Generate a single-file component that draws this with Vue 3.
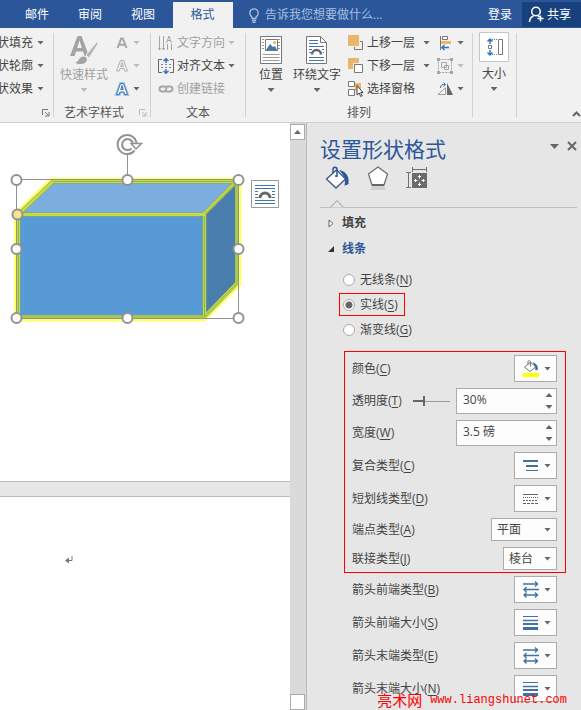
<script setup>
import { ref } from 'vue'

const tabs = ['邮件', '审阅', '视图', '格式']
const shapeMenus = ['状填充', '状轮廓', '状效果']
const line = ref('S')
const lineKinds = [
  { key: 'N', text: '无线条' },
  { key: 'S', text: '实线' },
  { key: 'G', text: '渐变线' },
]
const transparency = ref(30)
const width = ref('3.5 磅')
const cap = ref('平面')
const join = ref('棱台')
const arrows = [
  { key: 'B', text: '箭头前端类型', icon: 'type' },
  { key: 'S', text: '箭头前端大小', icon: 'size' },
  { key: 'E', text: '箭头末端类型', icon: 'type' },
  { key: 'N', text: '箭头末端大小', icon: 'size' },
]
const handles = [
  [16, 180], [127, 180], [238, 180], [16, 249], [238, 249], [16, 318], [127, 318], [238, 318],
]
</script>

<template>
  <div class="app">
    <header class="topbar">
      <nav class="tabs">
        <button v-for="t in tabs" :key="t" type="button" class="tab" :class="{ active: t === '格式' }">{{ t }}</button>
      </nav>
      <button type="button" class="tell">
        <svg width="10" height="15" viewBox="0 0 10 15" fill="none" stroke="#a9bfe0" stroke-width="1.3">
          <path d="M3 10.5V9C1.6 8 .8 6.700 .8 5a4.200 4.200 0 0 1 8.400 0c0 1.700-.8 3-2.200 4v1.500zM3 12.500h4M3.500 14.300h3" />
        </svg>
        <span>告诉我您想要做什么...</span>
      </button>
      <button type="button" class="login">登录</button>
      <button type="button" class="share">
        <svg width="17" height="17" viewBox="0 0 17 17" fill="none" stroke="#fff" stroke-width="1.500">
          <circle cx="8" cy="5.500" r="4.300" />
          <path d="M1.500 16c0-3 1.500-5 4.200-6.200M9.800 9.500l1.700 1.500M12.500 9.500v6M9.500 12.500h6" />
        </svg>
        <span>共享</span>
      </button>
    </header>

    <section class="ribbon">
      <div class="group g-shape">
        <div class="group-body">
          <div class="rows">
            <button v-for="m in shapeMenus" :key="m" type="button" class="cmd">{{ m }}<i class="caret"></i></button>
          </div>
        </div>
        <div class="group-label end">
          <svg class="launcher" width="8" height="8" viewBox="0 0 8 8"><path d="M.5 6V.5H6M3 3l3.500 3.500M7 3v4H3" /></svg>
        </div>
      </div>
      <i class="sep"></i>
      <div class="group g-art">
        <div class="group-body">
          <button type="button" class="big off">
            <svg width="30" height="30" viewBox="0 0 30 30">
              <path d="M1 21L8.500 1h4L20 21h-4.500l-1.500-4.500H7L5.500 21zM8.200 13h4.700L10.500 5.500z" fill="#a3a3a3" />
              <path d="M28.500 6L17 20l3 3L29 9z" fill="#b4b4b4" stroke="#f1f1f1" />
              <path d="M5 28c4 0 4-6 9-7 3 0 5 2 4 5-1.500 4-8 4.500-13 2z" fill="#a3a3a3" stroke="#f1f1f1" />
            </svg>
            <span>快速样式</span><i class="caret"></i>
          </button>
          <div class="rows art-rows">
            <button type="button" class="cmd off" aria-label="文本填充">
              <svg width="14" height="14" viewBox="0 0 14 14"><path d="M2.500 12L6.200 2.500h1.600l3.700 9.500M4 8.800h6" fill="none" stroke="#a6a6a6" stroke-width="2" /></svg><i class="caret"></i>
            </button>
            <button type="button" class="cmd off" aria-label="文本轮廓">
              <svg width="14" height="14" viewBox="0 0 14 14"><path d="M1.500 12L5.500 1.500h3l4 10.500h-2.700L9 9.500H5L4.200 12zM5.700 7.500h2.600L7 3.500z" fill="none" stroke="#b0b0b0" /></svg><i class="caret"></i>
            </button>
            <button type="button" class="cmd" aria-label="文本效果">
              <svg width="14" height="14" viewBox="0 0 14 14"><path d="M1.500 12.500L5.500 1.500h3l4 11h-2.700L9 10H5l-.8 2.500zM5.700 7.500h2.600L7 3.500z" fill="#fff" stroke="#9dc8ec" stroke-width="3" /><path d="M1.500 12.500L5.500 1.500h3l4 11h-2.700L9 10H5l-.8 2.500zM5.700 7.500h2.600L7 3.500z" fill="#fff" stroke="#3f74ad" /></svg><i class="caret"></i>
            </button>
          </div>
        </div>
        <div class="group-label">
          <span>艺术字样式</span>
          <svg class="launcher off" width="8" height="8" viewBox="0 0 8 8"><path d="M.5 6V.5H6M3 3l3.500 3.500M7 3v4H3" /></svg>
        </div>
      </div>
      <i class="sep"></i>
      <div class="group g-text">
        <div class="group-body">
          <div class="rows">
            <button type="button" class="cmd icon-cmd off">
              <svg width="16" height="16" viewBox="0 0 16 16" fill="none" stroke="#a6a6a6"><path d="M1.500 1v14M5.500 1v14M9.500 9v6M13.500 9v6M8.500 8l2.500-7 2.500 7M9.500 5.500h3M.5 13l1 2 1-2M4.500 13l1 2 1-2" /></svg>
              文字方向<i class="caret"></i>
            </button>
            <button type="button" class="cmd icon-cmd">
              <svg width="16" height="16" viewBox="0 0 16 16" fill="none"><path d="M4 1.500H.5v13H4M12 1.500h3.500v13H12" stroke="#666" /><path d="M3 6.500h2M7 6.500h2M11 6.500h2M3 9.500h2M7 9.500h2M11 9.500h2" stroke="#888" /><path d="M8 1v4M8 11v4M5.500 3L8 .8 10.500 3M5.500 13L8 15.200l2.500-2.200" stroke="#2f75b5" stroke-width="1.500" /></svg>
              对齐文本<i class="caret"></i>
            </button>
            <button type="button" class="cmd icon-cmd off">
              <svg width="16" height="16" viewBox="0 0 16 16" fill="none" stroke="#a6a6a6" stroke-width="2"><path d="M7.500 10.500H4A2.500 2.500 0 0 1 4 5.500h2.500c1 0 2 1 2 2.500M8.500 5.500H12a2.500 2.500 0 0 1 0 5H9.500c-1 0-2-1-2-2.500" /></svg>
              创建链接
            </button>
          </div>
        </div>
        <div class="group-label"><span>文本</span></div>
      </div>
      <i class="sep"></i>
      <div class="group g-arrange">
        <div class="group-body">
          <button type="button" class="big">
            <svg width="24" height="30" viewBox="0 0 24 30"><path d="M1.500 1.500h21v27h-21z" fill="#fff" stroke="#777" /><path d="M3 4.500h2M3 7.500h2M3 10.500h2M3 13.500h2M19 4.500h2M19 7.500h2M19 10.500h2M19 13.500h2M3.500 19.500h17M3.500 22.500h17M3.500 25.500h17" stroke="#999" /><path d="M6.500 4.500h12v11h-12z" fill="#fff" stroke="#777" /><path d="M7 15l4-6 3 3 2-1 2 4z" fill="#3f78ad" /><circle cx="15.500" cy="7.500" r="1.500" fill="#e8b05a" /></svg>
            <span>位置</span><i class="caret"></i>
          </button>
          <button type="button" class="big">
            <svg width="24" height="30" viewBox="0 0 24 30"><path d="M1.500 1.500h14l6 6v21h-20z" fill="#fff" stroke="#777" /><path d="M15.500 1.500v6h6" fill="none" stroke="#777" /><path d="M4 5.500h9M4 8.500h9M4 11.500h15M4 14.500h3M4 17.500h2M17 14.500h2M18 17.500h1M4 22.500h15M4 25.500h15" stroke="#3f78ad" /><path d="M7 19.500a4.500 4.500 0 0 1 9 0" fill="none" stroke="#666" stroke-width="2.500" /></svg>
            <span>环绕文字</span><i class="caret"></i>
          </button>
          <div class="rows order-rows">
            <button type="button" class="cmd">
              <svg width="16" height="16" viewBox="0 0 16 16"><path d="M12 6.500h2.500v8h-8V12" fill="none" stroke="#777" /><path d="M0 0h11v11H0z" fill="#ebb669" /></svg>
              <span>上移一层</span><i class="caret"></i>
            </button>
            <button type="button" class="cmd">
              <svg width="16" height="16" viewBox="0 0 16 16"><path d="M0 0h11v11H0z" fill="#ebb669" /><path d="M5 5h10v10H5z" fill="#f1f1f1" /><path d="M6.500 6.500h8v8h-8z" fill="#fff" stroke="#777" /></svg>
              <span>下移一层</span><i class="caret"></i>
            </button>
            <button type="button" class="cmd">
              <svg width="16" height="16" viewBox="0 0 16 16"><path d="M7 2h6v8H7z" fill="#ebb669" /><path d="M.5.5h6v5h-6zM.5 8.500h6v6h-6z" fill="#fff" stroke="#777" /><path d="M9 4.500v9.500l2.200-2 1.500 3.500 1.500-.7-1.500-3.300H15z" fill="#fff" stroke="#444" /></svg>
              <span>选择窗格</span>
            </button>
          </div>
          <div class="rows align-rows">
            <button type="button" class="cmd" aria-label="对齐">
              <svg width="16" height="16" viewBox="0 0 16 16"><path d="M3.500 1v14" stroke="#777" /><path d="M5.500 1.500h5v3h-5z" fill="#fff" stroke="#777" /><path d="M4 6h10v3H4z" fill="#ebb669" /><path d="M5 12.500h7M7.500 10L5 12.500 7.500 15" fill="none" stroke="#2f75b5" stroke-width="1.500" /></svg><i class="caret"></i>
            </button>
            <button type="button" class="cmd off" aria-label="组合">
              <svg width="16" height="16" viewBox="0 0 16 16" fill="none" stroke="#a6a6a6"><path d="M1.500 1.500h13v13h-13z" stroke-dasharray="2 1" /><path d="M4.500 4.500h5v5h-5zM7.500 7.500h4v4h-4z" /><path d="M0 0h3v3H0zM13 0h3v3h-3zM0 13h3v3H0zM13 13h3v3h-3z" fill="#a6a6a6" stroke="none" /></svg><i class="caret"></i>
            </button>
            <button type="button" class="cmd" aria-label="旋转">
              <svg width="16" height="16" viewBox="0 0 16 16"><path d="M1 13.500h7.500V7z" fill="#fff" stroke="#999" /><path d="M10 2v12h6z" fill="#666" /><path d="M3.500 7c0-3 2-4 4.500-3.500M6.500 1.500l2 2-2 2" fill="none" stroke="#2f75b5" /></svg><i class="caret"></i>
            </button>
          </div>
        </div>
        <div class="group-label"><span>排列</span></div>
      </div>
      <i class="sep"></i>
      <div class="group g-size">
        <div class="group-body">
          <button type="button" class="big boxed">
            <svg width="30" height="30" viewBox="0 0 30 30"><path d="M.5.5h29v29H.5z" fill="#fff" stroke="#c6c6c6" /><path d="M19.500 7.500h4v15h-4z" fill="#fff" stroke="#777" /><path d="M13 7.500h6M13 22.500h6" stroke="#777" stroke-dasharray="1 1" /><path d="M9.500 13.500h3v3h-3z" fill="#fff" stroke="#777" /><path d="M8.500 9.500L11 7l2.500 2.500M11 7v5M8.500 20.500L11 23l2.500-2.500M11 23v-5" fill="none" stroke="#2f75b5" stroke-width="1.500" /></svg>
            <span>大小</span><i class="caret"></i>
          </button>
        </div>
      </div>
      <i class="sep"></i>
      <button type="button" class="collapse" aria-label="折叠功能区">
        <svg width="9" height="6" viewBox="0 0 9 6"><path d="M1 5l3.500-3.500L8 5" fill="none" stroke="#666" stroke-width="2" /></svg>
      </button>
    </section>

    <main class="work">
      <div class="document">
        <div class="page first">
          <svg class="drawing" width="290" height="210" viewBox="0 123 290 210">
            <path d="M52 180.500H238.500V284L204 318.500H17V214z" fill="none" stroke="#ffff6e" stroke-width="6" />
            <path d="M52 181H238L204 214H18z" fill="#7badde" />
            <path d="M18 214H204V318H18z" fill="#589ad5" />
            <path d="M204 214L238 181V284L204 318z" fill="#497dad" />
            <g fill="none" stroke-linejoin="bevel">
              <path d="M53 181.500H237V283L204 317H18.500V214.500zM18 214.500H204.500V317M204 214L237 181" stroke="#7fab6e" stroke-width="4" />
              <path d="M53 181.500H237V283L204 317H18.500V214.500zM18 214.500H204.500V317M204 214L237 181" stroke="#c8da3c" stroke-width="3" />
              <path d="M53 181.500H237V283L204 317H18.500V214.500M204.500 216V317M205 214L237 182" stroke="#8fb45f" />
            </g>
            <path d="M16.500 179.500h222v139h-222zM127.500 179v-25" fill="none" stroke="#929292" />
            <g fill="#fff" stroke="#929292" stroke-width="2">
              <circle v-for="(h, i) in handles" :key="i" :cx="h[0] + 0.5" :cy="h[1]" r="5" />
              <circle cx="17.500" cy="214.500" r="5" fill="#fbe28f" />
            </g>
            <g fill="none" stroke="#929292">
              <path d="M134.500 150.500a9.500 9.500 0 1 1 2-7.500" stroke-width="2" />
              <path d="M131.500 148.500a5.500 5.500 0 1 1 1.500-5" stroke-width="2" />
              <path d="M131 143.500h10.500l-5.500 5.500z" fill="#fff" stroke-width="1.500" />
            </g>
            <path d="M251.500 180.500h27v27h-27z" fill="#fff" stroke="#999" />
            <path d="M255 185.500h20M255 188.500h20M255 191.500h3M272 191.500h3M255 194.500h3M272 194.500h3M255 197.500h3M272 197.500h3M255 200.500h20M255 203.500h20" stroke="#3f78ad" />
            <path d="M260 198a5 5 0 0 1 10 0" fill="none" stroke="#666" stroke-width="3" />
          </svg>
        </div>
        <div class="page second">
          <svg width="8" height="9" viewBox="0 0 8 9"><path d="M7 1v4.500H2" fill="none" stroke="#777" /><path d="M4 2.500v6l-4-3z" fill="#777" /></svg>
        </div>
      </div>
      <div class="scroller">
        <button type="button" aria-label="向上滚动"><svg width="7" height="4" viewBox="0 0 7 4"><path d="M0 4l3.500-4L7 4z" fill="#666" /></svg></button>
        <button type="button" aria-label="向下滚动"></button>
      </div>

      <aside class="pane">
        <div class="pane-head">
          <h2>设置形状格式</h2>
          <button type="button" aria-label="选项"><svg width="9" height="5" viewBox="0 0 9 5"><path d="M0 0h9L4.500 5z" fill="#666" /></svg></button>
          <button type="button" aria-label="关闭"><svg width="10" height="10" viewBox="0 0 10 10"><path d="M1 1l8 8M9 1L1 9" stroke="#666" stroke-width="2" /></svg></button>
        </div>
        <div class="pane-tabs">
          <button type="button" aria-label="填充与线条">
            <svg width="24" height="24" viewBox="0 0 24 24"><path d="M14 4c6 1 9 5 9.500 9v5c-2 1.500-4 1.500-4 1.500 1-4 .5-8-2.500-12z" fill="#2b579a" /><path d="M1.500 13L11.500 4l9 9-9.500 9z" fill="#fff" stroke="#3d5a85" stroke-width="1.300" /><path d="M8 7V3.500c0-3 4-3 4 0V11M10 10h2" fill="none" stroke="#2b579a" stroke-width="1.500" /></svg>
          </button>
          <button type="button" aria-label="效果">
            <svg width="24" height="24" viewBox="0 0 24 24"><path d="M6 20h12l2 4H4z" fill="#cfcfcf" /><path d="M12 1l9.500 7-3.500 11H6L2.500 8z" fill="#fff" stroke="#707070" stroke-width="1.300" /><path d="M6 19h12" stroke="#666" stroke-width="2" /></svg>
          </button>
          <button type="button" aria-label="布局属性">
            <svg width="24" height="24" viewBox="0 0 24 24"><path d="M-1 6.500h5M-1 21.500h5M1.500 6.500v15M5.500 1v5M19.500 1v5M5.500 3.500h14" stroke="#707070" fill="none" /><path d="M5 7h15v15H5z" fill="#6b6b6b" /><path d="M12.500 9.500v3M12.500 16.500v3M7.500 14.500h3M14.500 14.500h3M11 11l1.500-1.500L14 11M11 18l1.500 1.500L14 18M9 13l-1.500 1.500L9 16M16 13l1.500 1.500L16 16" stroke="#fff" fill="none" /></svg>
          </button>
        </div>
        <div class="pane-rule">
          <svg width="14" height="9" viewBox="0 0 14 9"><path d="M0 8.500L7 1l7 7.500z" fill="#e6e6e6" /><path d="M.5 8.500L7 1.500l6.500 7" fill="none" stroke="#bdbdbd" stroke-width="1.500" /></svg>
        </div>

        <button type="button" class="fold">
          <svg width="6" height="9" viewBox="0 0 6 9"><path d="M1 1l4 3.500L1 8z" fill="#fff" stroke="#666" /></svg>填充
        </button>
        <button type="button" class="fold open">
          <svg width="6" height="6" viewBox="0 0 6 6"><path d="M6 0v6H0z" fill="#333" /></svg>线条
        </button>

        <div class="kinds">
          <label v-for="k in lineKinds" :key="k.key" :class="{ marked: k.key === 'S' }">
            <input v-model="line" type="radio" name="line" :value="k.key" /><span>{{ k.text }}(<u>{{ k.key }}</u>)</span>
          </label>
        </div>

        <div class="settings marked">
          <div class="row">
            <label for="color">颜色(<u>C</u>)</label>
            <button id="color" type="button" class="pick">
              <svg width="17" height="17" viewBox="0 0 17 17"><path d="M10.500 2.500c3.500.5 5.500 3 5.500 7l-2.500 1c0-3-1-5-3-8z" fill="#3f6a95" /><path d="M2.500 7l6-5 5 5-5.500 4.500z" fill="#fff" stroke="#777" /><path d="M6 5V2C6 0 8.500 0 8.500 2v4.500" fill="none" stroke="#777" /><path d="M1 13h16v4H1z" fill="#ff0" /></svg><i class="caret"></i>
            </button>
          </div>
          <div class="row">
            <label for="transparency">透明度(<u>T</u>)</label>
            <input v-model="transparency" class="slider" type="range" min="0" max="100" aria-label="透明度" />
            <div class="spin">
              <input id="transparency" type="text" :value="transparency + '%'" />
              <span><button type="button" aria-label="增加"><i class="caret up"></i></button><button type="button" aria-label="减少"><i class="caret"></i></button></span>
            </div>
          </div>
          <div class="row">
            <label for="width">宽度(<u>W</u>)</label>
            <div class="spin">
              <input id="width" v-model="width" type="text" />
              <span><button type="button" aria-label="增加"><i class="caret up"></i></button><button type="button" aria-label="减少"><i class="caret"></i></button></span>
            </div>
          </div>
          <div class="row">
            <label for="compound">复合类型(<u>C</u>)</label>
            <button id="compound" type="button" class="pick">
              <svg width="17" height="17" viewBox="0 0 17 17" stroke="#41719c"><path d="M1 4h15M4 9h12" stroke-width="2" /><path d="M4 13.500h12" /></svg><i class="caret"></i>
            </button>
          </div>
          <div class="row">
            <label for="dash">短划线类型(<u>D</u>)</label>
            <button id="dash" type="button" class="pick">
              <svg width="17" height="17" viewBox="0 0 17 17" stroke="#666"><path d="M1 4.500h15" /><path d="M1 7.500h15" stroke-dasharray="1 1" /><path d="M1 10.500h15" stroke-dasharray="2 1" /><path d="M1 13.500h15" stroke-dasharray="3 1" /></svg><i class="caret"></i>
            </button>
          </div>
          <div class="row">
            <label for="cap">端点类型(<u>A</u>)</label>
            <div class="choice wide">
              <select id="cap" v-model="cap"><option>平面</option><option>圆形</option><option>正方形</option></select><i class="caret"></i>
            </div>
          </div>
          <div class="row">
            <label for="join">联接类型(<u>J</u>)</label>
            <div class="choice">
              <select id="join" v-model="join"><option>棱台</option><option>圆形</option><option>斜接</option></select><i class="caret"></i>
            </div>
          </div>
        </div>
        <div class="settings">
          <div v-for="a in arrows" :key="a.key" class="row">
            <label :for="'arrow-' + a.key">{{ a.text }}(<u>{{ a.key }}</u>)</label>
            <button :id="'arrow-' + a.key" type="button" class="pick">
              <svg v-if="a.icon === 'type'" width="17" height="17" viewBox="0 0 17 17" fill="none" stroke="#41719c"><path d="M1 3h15M13 .5L15.500 3 13 5.500M2 8.500h15M4.500 6L2 8.500 4.500 11M2 14h14M4.500 11.500L2 14l2.500 2.500M13 11.500l2.500 2.500-2.500 2.500" stroke-width="1.300" /></svg>
              <svg v-else width="17" height="17" viewBox="0 0 17 17" stroke="#41719c"><path d="M1 2.500h15" /><path d="M1 6.500h15" stroke-width="1.500" /><path d="M1 10h15" stroke-width="2" /><path d="M1 14.500h15" stroke-width="3" /></svg>
              <i class="caret"></i>
            </button>
          </div>
        </div>
      </aside>
    </main>
    <p class="credit"><span>亮术网</span>www.liangshunet.com</p>
  </div>
</template>

<style>
body {
  margin: 0;
}
</style>

<style scoped>
.app {
  position: relative;
  display: flex;
  flex-direction: column;
  min-height: 100vh;
  overflow: hidden;
  font: 12px/18px "Open Sans", "Noto Sans CJK SC", sans-serif;
  color: #444;
  background: #e6e6e6;
}
.app * {
  box-sizing: border-box;
}
button,
input,
select {
  margin: 0;
  padding: 0;
  border: 0;
  border-radius: 0;
  background: none;
  font: inherit;
  color: inherit;
}
svg {
  display: block;
  flex: none;
  overflow: visible;
}
u {
  text-underline-offset: 2px;
}
.caret {
  flex: none;
  width: 7px;
  height: 4px;
  background: #666;
  clip-path: polygon(0 0, 100% 0, 50% 100%);
}
.caret.up {
  clip-path: polygon(50% 0, 100% 100%, 0 100%);
}
.topbar {
  display: flex;
  height: 28px;
  padding-top: 2px;
  background: #2b579a;
  color: #fff;
}
.tabs {
  display: flex;
  padding-left: 14px;
}
.tab {
  width: 53px;
  padding-right: 7px;
}
.tab.active {
  width: 60px;
  padding: 0 1px 0 0;
  background: #f1f1f1;
  color: #2b579a;
}
.tell {
  display: flex;
  flex: 1;
  align-items: center;
  gap: 6px;
  padding-left: 16px;
  color: #a9bfe0;
  white-space: nowrap;
}
.login {
  padding: 0 10px;
}
.share {
  display: flex;
  align-items: center;
  gap: 2px;
  height: 25px;
  padding: 0 10px 0 6px;
  background: #17407c;
}
.ribbon {
  display: flex;
  padding-top: 3px;
  border-bottom: 1px solid #cfcfcf;
  background: #f1f1f1;
}
.sep {
  width: 1px;
  margin: 2px 0 5px;
  background: #d2d2d2;
}
.group-body {
  display: flex;
  height: 69px;
}
.group-label {
  display: flex;
  align-items: center;
  justify-content: center;
  height: 22px;
  padding-top: 3px;
  color: #555;
}
.rows {
  display: grid;
  grid-template-rows: repeat(3, 23px);
}
.cmd {
  display: flex;
  align-items: center;
  gap: 4px;
  white-space: nowrap;
}
.big {
  display: flex;
  flex-direction: column;
  align-items: center;
  padding-top: 4px;
  white-space: nowrap;
}
.big span {
  margin-top: 1px;
}
.big .caret {
  margin-top: 4px;
}
.off {
  color: #a0a0a0;
}
.off .caret {
  background: #bbb;
}
.launcher {
  fill: none;
  stroke: #777;
}
.launcher.off {
  stroke: #bbb;
}
.g-shape {
  width: 53px;
}
.g-shape .rows {
  margin-left: -3px;
}
.group-label.end {
  justify-content: flex-end;
  padding-right: 3px;
}
.g-art {
  width: 96px;
}
.g-art .group-body {
  gap: 7px;
  padding-left: 6px;
}
.g-art .group-label {
  justify-content: space-between;
  padding-right: 3px;
  padding-left: 10px;
}
.g-text {
  width: 94px;
  padding-left: 7px;
}
.g-text .group-label {
  padding-right: 7px;
}
.icon-cmd {
  gap: 3px;
}
.g-arrange {
  width: 226px;
}
.g-arrange .group-body {
  padding-left: 13px;
}
.g-arrange .big {
  margin-right: 10px;
}
.order-rows {
  margin-left: -3px;
}
.order-rows .cmd {
  gap: 3px;
}
.order-rows .caret {
  margin-left: 5px;
}
.align-rows {
  margin-left: 7px;
}
.g-size {
  width: 43px;
  padding-left: 6px;
}
.big.boxed {
  padding-top: 1px;
}
.big.boxed span {
  margin-top: 3px;
}
.collapse {
  align-self: flex-end;
  margin-left: auto;
  padding-bottom: 5px;
}
.work {
  display: flex;
  flex: 1;
}
.document {
  display: flex;
  flex: 1;
  flex-direction: column;
  gap: 14px;
  min-width: 0;
}
.page {
  background: #fff;
}
.first {
  height: 359px;
  border-bottom: 1px solid #bcbcbc;
}
.second {
  flex: 1;
  padding: 58px 0 0 65px;
  border-top: 1px solid #bcbcbc;
}
.scroller {
  display: flex;
  flex-direction: column;
  justify-content: space-between;
  width: 16px;
  padding: 1px 1px 1px 0;
  background: #dadada;
}
.scroller button {
  display: grid;
  place-items: center;
  height: 16px;
  border: 1px solid #ababab;
  background: #fff;
}
.pane {
  width: 275px;
  padding: 11px 4px 6px 13px;
  border-left: 1px solid #b8b8b8;
}
.pane-head {
  display: flex;
  align-items: center;
  gap: 8px;
}
.pane-head h2 {
  flex: 1;
  margin: 0;
  font-size: 21px;
  font-weight: 400;
  line-height: 30px;
  color: #2b579a;
}
.pane-head button {
  padding-bottom: 6px;
}
.pane-tabs {
  display: flex;
  gap: 17px;
  padding: 2px 0 0 5px;
}
.pane-rule {
  margin: 9px 0 2px;
  border-bottom: 1px solid #bdbdbd;
}
.pane-rule svg {
  margin: 0 0 -1px 10px;
}
.fold {
  display: flex;
  align-items: center;
  gap: 8px;
  height: 26px;
  padding-left: 8px;
  font-weight: 700;
}
.fold.open {
  color: #2b579a;
}
.kinds {
  display: grid;
  justify-items: start;
  gap: 2px;
  margin: 6px 11px 5px 19px;
}
.kinds label {
  display: flex;
  align-items: center;
  gap: 5px;
  height: 23px;
  padding: 0 6px 0 3px;
  border: 1px solid transparent;
}
.kinds .marked {
  border-color: #f00;
}
.kinds input {
  appearance: none;
  width: 12px;
  height: 12px;
  border: 1px solid #ababab;
  border-radius: 50%;
  background: #fff;
}
.kinds input:checked {
  background: radial-gradient(circle, #666 0 3px, #fff 4px);
}
.settings {
  display: grid;
  gap: 6px;
  margin: 0 11px 0 24px;
  padding: 2px 8px 2px 7px;
  border: 1px solid transparent;
}
.settings.marked {
  margin-top: 10px;
  padding-top: 3px;
  border-color: #f00;
}
.row {
  display: flex;
  align-items: center;
  justify-content: space-between;
}
.pick {
  display: flex;
  align-items: center;
  justify-content: space-between;
  width: 43px;
  height: 27px;
  padding: 0 5px 0 7px;
  border: 1px solid #ababab;
  background: #fdfdfd;
}
.spin {
  display: flex;
  width: 101px;
  height: 26px;
  border: 1px solid #ababab;
  background: #fdfdfd;
}
.spin input {
  flex: 1;
  min-width: 0;
  padding-left: 6px;
  padding-bottom: 2px;
}
.spin span {
  display: grid;
  width: 14px;
}
.spin button {
  display: grid;
  place-items: center;
}
.slider {
  appearance: none;
  width: 37px;
  height: 10px;
  margin-right: -5px;
  background: linear-gradient(#666, #666) 0 4px / 11px 2px no-repeat, linear-gradient(#999, #999) 0 5px / 100% 1px no-repeat;
}
.slider::-webkit-slider-thumb {
  appearance: none;
  width: 2px;
  height: 10px;
  background: #666;
}
.choice {
  display: flex;
  align-items: center;
  width: 54px;
  height: 23px;
  padding-right: 5px;
  border: 1px solid #ababab;
  background: #fdfdfd;
}
.choice.wide {
  width: 66px;
}
.choice select {
  flex: 1;
  appearance: none;
  min-width: 0;
  padding-left: 5px;
}
.credit {
  position: absolute;
  right: 14px;
  bottom: 0;
  display: flex;
  gap: 8px;
  margin: 0;
  padding-bottom: 3px;
  font: 12px/16px "Liberation Mono", monospace;
  color: #f00;
}
.credit span {
  font: 15px/16px "Noto Sans CJK SC", sans-serif;
}
</style>
